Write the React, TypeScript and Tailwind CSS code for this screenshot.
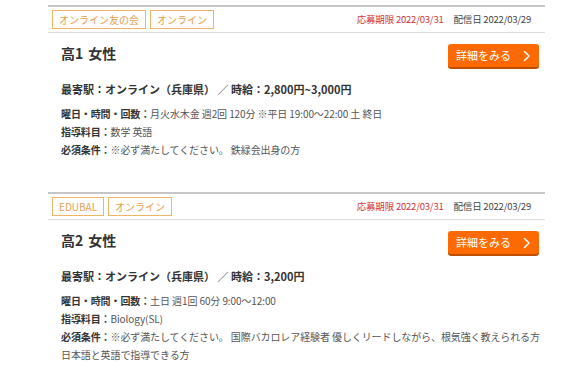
import React from 'react'

type Job = {
  tags: string[]
  title: string
  station: string
  wage: string
  schedule: string
  subject: string
  requirement: string[]
}

const jobs: Job[] = [
  {
    tags: ['オンライン友の会', 'オンライン'],
    title: '高1',
    station: 'オンライン（兵庫県）',
    wage: '2,800円~3,000円',
    schedule: '月火水木金 週2回 120分 ※平日 19:00〜22:00 土 終日',
    subject: '数学 英語',
    requirement: ['※必ず満たしてください。 鉄緑会出身の方'],
  },
  {
    tags: ['EDUBAL', 'オンライン'],
    title: '高2',
    station: 'オンライン（兵庫県）',
    wage: '3,200円',
    schedule: '土日 週1回 60分 9:00〜12:00',
    subject: 'Biology(SL)',
    requirement: [
      '※必ず満たしてください。 国際バカロレア経験者 優しくリードしながら、根気強く教えられる方',
      '日本語と英語で指導できる方',
    ],
  },
]

function Chevron() {
  return (
    <svg width="8" height="12" viewBox="0 0 8 12" fill="none">
      <path d="M1.5 1.5 L6 6 L1.5 10.5" stroke="white" strokeWidth="1.5" strokeLinecap="round" strokeLinejoin="round" />
    </svg>
  )
}

function JobCard({ job }: { job: Job }) {
  return (
    <div className="border-t-2 border-[#c6c6c6]">
      {/* tags + dates */}
      <div className="flex items-center justify-between h-[26px] pl-[4px] pr-[14px] border-b border-[#dcdcdc]">
        <div className="flex gap-[4px]">
          {job.tags.map((t) => (
            <span
              key={t}
              className="h-[19px] px-[6px] flex items-center border border-[#f0b468] text-[10px] text-[#e8a050]"
            >
              {t}
            </span>
          ))}
        </div>
        <div className="flex gap-[10px] text-[9.5px] tracking-[-0.2px]">
          <span className="text-[#d2343c]">応募期限 2022/03/31</span>
          <span className="text-[#444]">配信日 2022/03/29</span>
        </div>
      </div>

      <div className="pl-[13px] pr-[6px]">
        <div className="flex justify-between items-start mt-[11px]">
          <h3 className="text-[14px] font-bold text-[#333] leading-[20px] mt-[-1px] flex gap-[5px]">
            <span>{job.title}</span>
            <span>女性</span>
          </h3>
          <button className="w-[91px] h-[23px] rounded-[3px] bg-[#ff6a00] shadow-[0_2px_0_#c14f00] flex items-center justify-end gap-[12px] pr-[8px] text-white text-[11px]">
            <span>詳細をみる</span>
            <Chevron />
          </button>
        </div>

        <p className="mt-[13px] text-[11px] font-bold text-[#333] leading-[18px]">
          最寄駅：{job.station} ／ 時給：{job.wage}
        </p>

        <div className="mt-[7px] text-[10px] tracking-[-0.1px] leading-[18px] text-[#555]">
          <p className="whitespace-nowrap">
            <span className="font-bold text-[#333]">曜日・時間・回数：</span>
            {job.schedule}
          </p>
          <p className="whitespace-nowrap">
            <span className="font-bold text-[#333]">指導料目：</span>
            {job.subject}
          </p>
          <p className="whitespace-nowrap">
            <span className="font-bold text-[#333]">必須条件：</span>
            {job.requirement[0]}
          </p>
          {job.requirement.slice(1).map((r) => (
            <p key={r} className="whitespace-nowrap">
              {r}
            </p>
          ))}
        </div>
      </div>
    </div>
  )
}

export default function App() {
  return (
    <div className="w-[581px] h-[375px] bg-white overflow-hidden font-['Noto_Sans_CJK_JP',sans-serif]">
      <div className="ml-[48px] w-[497px] pt-[5px] flex flex-col gap-[33px]">
        {jobs.map((j) => (
          <JobCard key={j.title} job={j} />
        ))}
      </div>
    </div>
  )
}
